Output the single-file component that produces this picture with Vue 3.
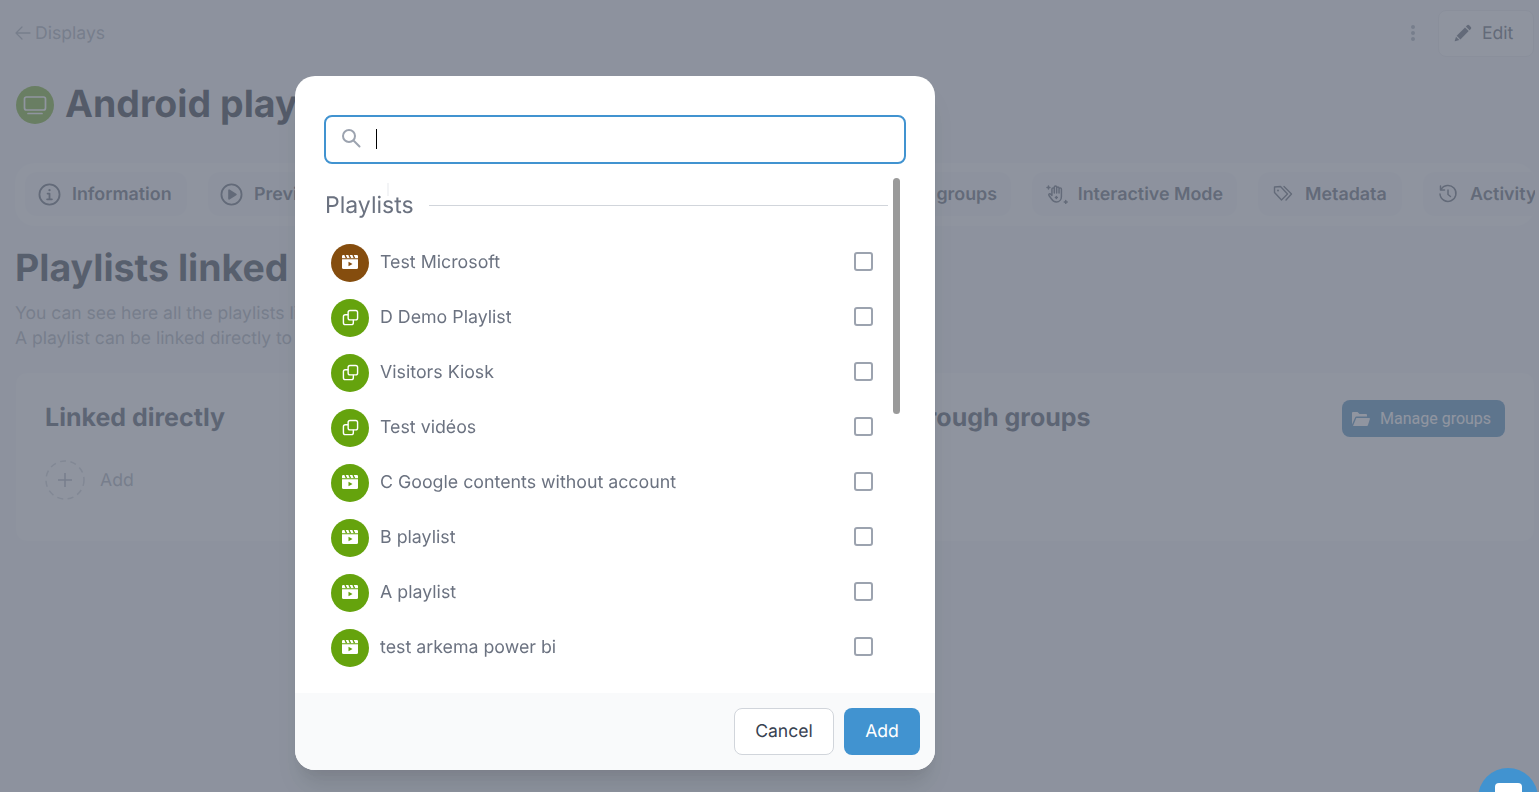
<script setup>
const rows = [
  { name: 'Test Microsoft', kind: 'clap', color: 'brown' },
  { name: 'D Demo Playlist', kind: 'copy', color: 'green' },
  { name: 'Visitors Kiosk', kind: 'copy', color: 'green' },
  { name: 'Test vidéos', kind: 'copy', color: 'green' },
  { name: 'C Google contents without account', kind: 'clap', color: 'green' },
  { name: 'B playlist', kind: 'clap', color: 'green' },
  { name: 'A playlist', kind: 'clap', color: 'green' },
  { name: 'test arkema power bi', kind: 'clap', color: 'green' },
]
</script>

<template>
  <div class="page">
    <header class="topbar">
      <a class="back">
        <svg width="16" height="16" viewBox="0 0 16 16" fill="none" stroke="currentColor" stroke-width="1.3" stroke-linecap="round" stroke-linejoin="round"><path d="M15 8H1M7 2 1 8l6 6" /></svg>
        <span>Displays</span>
      </a>
      <div class="top-actions">
        <span class="dots"><i></i><i></i><i></i></span>
        <button class="edit">
          <svg width="18" height="18" viewBox="0 0 18 18" fill="currentColor"><path d="M13.100 1.300a1.500 1.500 0 0 1 2.100 0l1.600 1.600a1.500 1.500 0 0 1 0 2.100l-1.200 1.200-3.700-3.700z" /><path d="M11 3.400l3.700 3.700-8.300 8.300-3.700-3.700z" /><path d="M2 12.800l3.300 3.300-4.300 1.200a.3.3 0 0 1-.3-.3z" /></svg>
          <span>Edit</span>
        </button>
      </div>
    </header>

    <div class="title-row">
      <span class="display-icon">
        <svg width="24" height="24" viewBox="0 0 24 24" fill="none" stroke="currentColor" stroke-width="1.7" stroke-linecap="round"><rect x="1.500" y="4" width="21" height="13" rx="2" /><path d="M5 20.500h14" /></svg>
      </span>
      <h1>Android player</h1>
    </div>

    <nav class="tabs">
      <div class="tab t-info">
        <svg width="23" height="23" viewBox="0 0 24 24" fill="none" stroke="currentColor" stroke-width="1.900"><circle cx="12" cy="12" r="10.500" /><path d="M12 11v6M9.500 17h5M10 11h2" stroke-linecap="round" /><circle cx="12" cy="7.500" r="1.200" fill="currentColor" stroke="none" /></svg>
        <span>Information</span>
      </div>
      <div class="tab t-prev">
        <svg width="23" height="23" viewBox="0 0 24 24" fill="none" stroke="currentColor" stroke-width="1.900"><circle cx="12" cy="12" r="10.500" /><path d="M9.500 7.500v9l7-4.500z" fill="currentColor" stroke-linejoin="round" /></svg>
        <span>Preview</span>
      </div>
      <div class="tab t-groups"><span>Display groups</span></div>
      <div class="tab t-inter">
        <svg width="22" height="20" viewBox="0 0 22 20" fill="none" stroke="currentColor" stroke-width="1.500" stroke-linecap="round" stroke-linejoin="round"><path d="M6 11V5a1.200 1.200 0 0 1 2.400 0v4M8.400 4.200V3a1.200 1.200 0 0 1 2.400 0v6M10.800 4a1.200 1.200 0 0 1 2.400 0v5M13.200 5a1.200 1.200 0 0 1 2.400 0v7.500c0 3-2 5.500-5 5.500-2.500 0-4-1-5-3L3 11.500c-.7-1.300.9-2.300 1.800-1.300L6 11.500" /><path d="M1 3.500h3M2.500 2v3M18.500 18h3M20 16.500v3M9.500 13.500h2M10.500 12.500v2" /></svg>
        <span>Interactive Mode</span>
      </div>
      <div class="tab t-meta">
        <svg width="20" height="20" viewBox="0 0 20 20" fill="none" stroke="currentColor" stroke-width="1.400" stroke-linejoin="round"><path d="M1.500 3v5.500l7 7.500 6-6-7-7.500z" /><path d="M11 2.500l7.500 7.500-5.500 6" stroke-linecap="round" /><circle cx="5" cy="6.500" r="1" fill="currentColor" stroke="none" /></svg>
        <span>Metadata</span>
      </div>
      <div class="tab t-act">
        <svg width="20" height="20" viewBox="0 0 20 20" fill="none" stroke="currentColor" stroke-width="1.500" stroke-linecap="round" stroke-linejoin="round"><path d="M3 5.500A8 8 0 1 1 2 10" /><path d="M2.500 2v4h4M10 6v4.500l2.500 2" /></svg>
        <span>Activity</span>
      </div>
    </nav>

    <h2 class="section">Playlists linked to this display</h2>
    <p class="desc">You can see here all the playlists linked to this display.<br />A playlist can be linked directly to this display or through groups.</p>

    <div class="cards">
      <section class="card">
        <h3>Linked directly</h3>
        <div class="add">
          <svg width="40" height="40" viewBox="0 0 40 40" fill="none"><circle cx="20" cy="20" r="19" stroke="#c5c9d0" stroke-width="1.500" stroke-dasharray="6 4.500" /><path d="M20 13v14M13 20h14" stroke="#9ca3af" stroke-width="1.500" /></svg>
          <span>Add</span>
        </div>
      </section>
      <section class="card">
        <div class="card-head">
          <h3>Linked through groups</h3>
          <button class="manage">
            <svg width="18" height="16" viewBox="0 0 18 16" fill="currentColor"><path d="M0 2a1 1 0 0 1 1-1h4.500l2 2H14a1 1 0 0 1 1 1v1.500H4.500a1.500 1.500 0 0 0-1.400 1L0 13.500zM4.300 7h12.800a.8.8 0 0 1 .8 1l-2 6.200a1 1 0 0 1-1 .8H1z" /></svg>
            <span>Manage groups</span>
          </button>
        </div>
      </section>
    </div>
  </div>

  <div class="overlay">
    <div class="modal">
      <div class="modal-body">
        <div class="search">
          <svg width="20" height="20" viewBox="0 0 20 20" fill="none" stroke="currentColor" stroke-width="2" stroke-linecap="round"><circle cx="8" cy="8" r="6" /><path d="m13 13 5.500 5.500" /></svg>
          <span class="caret"></span>
        </div>
        <div class="list-head">
          <span>Playlists</span>
          <i></i>
        </div>
        <ul class="list">
          <li v-for="row in rows" :key="row.name" class="row">
            <span class="avatar" :class="row.color">
              <svg v-if="row.kind === 'clap'" width="18" height="18" viewBox="0 1 18 18" fill="currentColor"><path d="M1 6.200h16v8.300a1.500 1.500 0 0 1-1.500 1.500h-13A1.500 1.500 0 0 1 1 14.500z" /><path d="M2.200 2h13.600A1.200 1.200 0 0 1 17 3.200V5.200H1V3.200A1.200 1.200 0 0 1 2.200 2z" /><path d="m4 2 1.500 3.200M8 2l1.500 3.200M12 2l1.500 3.200" stroke="var(--av)" stroke-width="1.400" /><path d="m7.500 8.700 4 2.300-4 2.300z" fill="var(--av)" /></svg>
              <svg v-else width="17" height="17" viewBox="0 0 18 18" fill="none" stroke="currentColor" stroke-width="1.500" stroke-linejoin="round"><rect x="6.500" y="1.500" width="10" height="10" rx="2" /><path d="M6.500 6H3.500a2 2 0 0 0-2 2v6.500a2 2 0 0 0 2 2H10a2 2 0 0 0 2-2v-3" /></svg>
            </span>
            <span class="row-name">{{ row.name }}</span>
            <span class="check"></span>
          </li>
        </ul>
        <span class="scrollbar"></span>
        <span class="speck"></span>
      </div>
      <footer class="modal-foot">
        <button class="btn cancel">Cancel</button>
        <button class="btn primary">Add</button>
      </footer>
    </div>
  </div>

  <div class="chat"><span></span></div>
</template>

<style>
html, body { margin: 0; height: 100%; overflow: hidden; background: #f3f4f6; }
</style>

<style scoped>
* { box-sizing: border-box; }
.page {
  width: 1539px; height: 792px; overflow: hidden; padding: 0 4px 0 15px;
  font-family: Inter, "Noto Sans", sans-serif; color: #111827; background: #f3f4f6;
  text-rendering: geometricPrecision;
}
.topbar { height: 66px; display: flex; align-items: center; justify-content: space-between; }
.back { display: flex; align-items: center; gap: 4px; color: #9ca3af; font-size: 17.6px; }
.top-actions { display: flex; align-items: center; gap: 23px; margin-right: 1px; }
.dots { display: flex; flex-direction: column; gap: 1.500px; }
.dots i { width: 4.500px; height: 4.500px; border-radius: 50%; background: #9ca3af; }
.edit {
  width: 96px; height: 47px; display: flex; align-items: center; gap: 10px; padding: 0 0 0 15px;
  border: 1px solid #e5e7eb; border-radius: 8px; background: #f9fafb; color: #4b5563;
  font: 400 17.6px Inter, sans-serif; text-rendering: geometricPrecision;
}
.title-row { margin-top: 20px; display: flex; align-items: center; gap: 11px; padding-left: 1px; }
.display-icon {
  width: 38px; height: 38px; border-radius: 50%; background: #65a30d; color: #fff;
  display: flex; align-items: center; justify-content: center;
}
h1 { margin: 0; font-size: 37.5px; line-height: 38px; font-weight: 700; }
.tabs {
  margin-top: 39px; height: 63px; width: 1520px; padding: 9px 10px; display: flex; gap: 21px;
  background: #f9fafb; border-radius: 20px; overflow: hidden;
}
.tab {
  flex: none; height: 44px; display: flex; align-items: center; gap: 10px; padding: 0 14px;
  border-radius: 12px; background: #f3f4f6; color: #4b5563; font-size: 17.85px; font-weight: 600; white-space: nowrap;
}
.tab span { margin-top: 1px; }
.t-info { width: 162px; padding-left: 13px; gap: 11px; }
.t-prev { width: 130px; padding-left: 12px; gap: 11px; }
.t-groups { width: 652px; justify-content: flex-end; }
.t-inter { width: 205px; }
.t-meta { width: 144px; padding-left: 15px; gap: 12px; }
.t-act { width: 140px; padding-left: 15px; gap: 12px; }
.section { margin: 21px 0 0; font-size: 37.5px; line-height: 44px; font-weight: 700; color: #1f2937; }
.desc { margin: 10px 0 0; font-size: 17.5px; line-height: 25px; color: #9ca3af; }
.cards { margin-top: 21px; width: 1520px; display: grid; grid-template-columns: 1fr 1fr; gap: 20px; }
.card {
  height: 170px; padding: 28px 29px; background: #f9fafb; border: 1px solid #f3f4f6;
  border-radius: 12px;
}
h3 { margin: 0; font-size: 25px; line-height: 34px; font-weight: 700; color: #374151; }
.card-head { display: flex; justify-content: space-between; align-items: flex-start; }
.add { margin-top: 25px; display: flex; align-items: center; gap: 15px; color: #9ca3af; font-size: 17.6px; }
.manage {
  width: 163px; height: 37px; margin-top: -1px; display: flex; align-items: center; gap: 10px; padding: 0 10px;
  border: 0; border-radius: 8px; background: #3a7fb4; color: #fff; font: 400 16px Roboto, sans-serif;
}
.overlay {
  position: fixed; inset: 0; background: rgba(107, 114, 128, .75); backdrop-filter: blur(.7px);
  display: flex; align-items: flex-start; padding: 76px 0 0 295px;
}
.modal {
  width: 640px; height: 694px; background: #fff; border-radius: 20px; overflow: hidden;
  display: flex; flex-direction: column; font-family: Inter, sans-serif; text-rendering: geometricPrecision;
  box-shadow: 0 20px 25px -5px rgba(0,0,0,.1), 0 10px 10px -5px rgba(0,0,0,.04);
}
.modal-body { position: relative; flex: 1; padding: 39px 29px 0; min-height: 0; }
.search {
  height: 49px; border: 2px solid #4193d0; border-radius: 8px; display: flex; align-items: center;
  padding-left: 15px; color: #9ca3af;
}
.search svg { margin-top: -4px; }
.caret { width: 1px; height: 20px; margin: -2px 0 0 15px; background: #000; }
.list-head { margin-top: 27px; margin-left: 1px; display: flex; align-items: center; gap: 15px; color: #6b7280; font-size: 23px; line-height: 28px; width: 563px; }
.list-head i { flex: 1; height: 1px; background: #d1d5db; }
.list { list-style: none; margin: 16px 0 0; padding: 0 0 0 7px; width: 558px; }
.row { height: 55px; display: flex; align-items: center; font-size: 17.8px; color: #6b7280; }
.avatar {
  width: 38px; height: 38px; flex: none; border-radius: 50%; color: #fff; display: flex;
  align-items: center; justify-content: center; margin-right: 11px;
}
.avatar svg { display: block; }
.green { background: #65a30d; --av: #65a30d; }
.brown { background: #854d0e; --av: #854d0e; }
.row-name { flex: 1; }
.check { width: 19px; height: 19px; margin: -2px 9px 0 0; border: 2px solid #9ca3af; border-radius: 3px; background: #fff; }
.scrollbar { position: absolute; left: 598px; top: 102px; width: 7px; height: 236px; border-radius: 4px; background: #9a9a9a; }
.speck { position: absolute; left: 92px; top: 107px; width: 2px; height: 13px; background: #f3f4f6; }
.modal-foot {
  height: 77px; flex: none; background: #f9fafb; display: flex; justify-content: flex-end; gap: 10px;
  padding: 15px 15px 0 0;
}
.btn { height: 47px; border-radius: 8px; padding-bottom: 2px; font: 400 17.6px Inter, sans-serif; text-rendering: geometricPrecision; }
.cancel { width: 100px; background: #fff; border: 1px solid #d1d5db; color: #374151; }
.primary { width: 76px; background: #4193d0; border: 0; color: #fff; }
.chat {
  position: fixed; left: 1478px; top: 768px; width: 60px; height: 60px; border-radius: 50%;
  background: #4193d0; display: flex; justify-content: center; padding-top: 15px;
}
.chat span { width: 27px; height: 24px; border-radius: 4px; background: #fff; }
</style>
